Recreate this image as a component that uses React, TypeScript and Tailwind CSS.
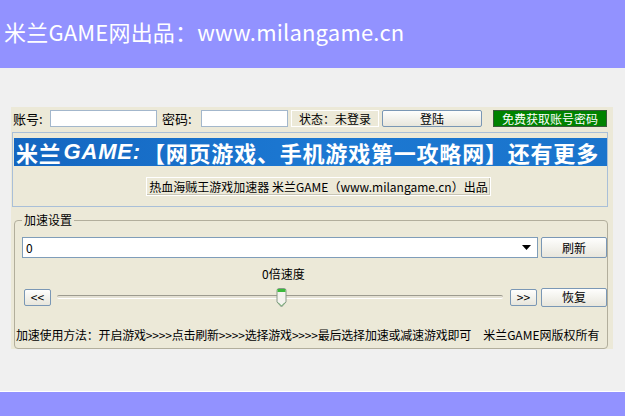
import React from 'react';

const cjk = "font-['Noto_Sans_CJK_SC','Noto_Sans',sans-serif]";
const xpBtn =
  'flex items-center justify-center rounded-[2px] border border-[#7a97b5] bg-gradient-to-b from-[#fefefd] to-[#e8e6dc] text-[12px] text-black';

const Thumb: React.FC = () => (
  <svg width="11" height="20" viewBox="0 0 11 20" className="absolute left-[219px] top-[-8px]">
    <path d="M1 2.5 Q1 0.5 3 0.5 H8 Q10 0.5 10 2.5 V14 L5.5 19 L1 14 Z" fill="#f4f3ee" stroke="#8a9a8a" />
    <rect x="1.5" y="1" width="8" height="3" fill="#3cb93c" />
    <path d="M2 14.5 L5.5 18 L9 14.5" fill="none" stroke="#6aa86a" />
  </svg>
);

const App: React.FC = () => {
  return (
    <div className={`w-[625px] h-[416px] bg-[#f0f0f0] flex flex-col overflow-hidden ${cjk}`}>
      {/* Site header */}
      <header className="h-[68px] shrink-0 bg-[#9292ff] flex items-center pl-[4px] pb-[6px]">
        <h1 className="text-[22px] leading-[30px] tracking-[0.2px] text-white">米兰GAME网出品：www.milangame.cn</h1>
      </header>

      {/* Accelerator window */}
      <div className="ml-[11px] mt-[39px] w-[602px] h-[242px] shrink-0 bg-[#ece9d8] flex flex-col text-black">
        {/* Login row */}
        <div className="mt-[3px] h-[17px] flex items-center text-[12px]">
          <span className="ml-[2px] w-[37px] text-[13px] leading-[17px]">账号:</span>
          <input className="w-[107px] h-[17px] bg-white border border-[#a3b7cc] outline-none" />
          <span className="ml-[5px] w-[39px] text-[13px] leading-[17px]">密码:</span>
          <input type="password" className="w-[87px] h-[17px] bg-white border border-[#a3b7cc] outline-none" />
          <div className="ml-[3px] w-[88px] h-[17px] border border-white flex items-center justify-center leading-[15px]">
            状态：未登录
          </div>
          <button className={`ml-[3px] w-[100px] h-[17px] ${xpBtn}`}>登陆</button>
          <button className="ml-[11px] w-[114px] h-[17px] bg-[#008200] border border-[#3b5b3b] text-white text-[12px] leading-[15px] flex items-center justify-center">
            免费获取账号密码
          </button>
        </div>

        {/* Banner box */}
        <div className="mt-[5px] ml-[1px] w-[596px] h-[75px] border border-[#a9bfd8] flex flex-col">
          <div className="mt-[5px] ml-[1px] h-[28px] bg-gradient-to-r from-[#1466c0] via-[#1c78d2] to-[#1a74cc] flex items-center pl-[2px] text-white font-bold text-[22px] leading-[24px] tracking-[0.8px] whitespace-nowrap">
            <span>米兰</span>
            <span className="italic font-['Liberation_Sans',sans-serif] mx-[2px]">GAME:</span>
            <span>【网页游戏、手机游戏第一攻略网】还有更多</span>
          </div>
          <div className="mt-[11px] ml-[133px] w-[345px] h-[19px] border border-white shadow-[inset_-1px_-1px_0_#c8c5b5] flex items-center justify-center text-[12px] leading-[17px]">
            热血海贼王游戏加速器 米兰GAME（www.milangame.cn）出品
          </div>
        </div>

        {/* Speed settings */}
        <fieldset className="mt-[6px] ml-[3px] w-[594px] h-[136px] p-0 m-0 border border-[#b2ae9c] rounded-[4px]">
          <legend className="ml-[7px] px-[2px] text-[12px] leading-[14px]">加速设置</legend>

          <div className="mt-[10px] flex items-center">
            <div className="ml-[7px] w-[516px] h-[21px] bg-white border border-[#7f9db9] flex items-center justify-between pl-[3px] pr-[6px] text-[12px]">
              <span>0</span>
              <svg width="9" height="5" viewBox="0 0 9 5">
                <path d="M0 0 H9 L4.5 5 Z" fill="#000" />
              </svg>
            </div>
            <button className={`ml-[3px] w-[66px] h-[21px] ${xpBtn}`}>刷新</button>
          </div>

          <div className="mt-[9px] pl-[247px] text-[12px] leading-[14px]">0倍速度</div>

          <div className="mt-[7px] h-[18px] flex items-center">
            <button className={`ml-[9px] w-[27px] h-[17px] ${xpBtn} leading-none`}>&lt;&lt;</button>
            <div className="relative ml-[6px] w-[446px] h-[4px] rounded-[2px] border-t border-[#9d9b8f] border-b border-b-white bg-[#e4e1d4]">
              <Thumb />
            </div>
            <button className={`ml-[7px] w-[27px] h-[17px] ${xpBtn} leading-none`}>&gt;&gt;</button>
            <button className={`ml-[4px] w-[66px] h-[19px] ${xpBtn}`}>恢复</button>
          </div>

          <p className="mt-[22px] ml-[1px] text-[12px] leading-[14px] whitespace-nowrap">
            <span className="tracking-[-0.2px]">
              加速使用方法：开启游戏&gt;&gt;&gt;&gt;点击刷新&gt;&gt;&gt;&gt;选择游戏&gt;&gt;&gt;&gt;最后选择加速或减速游戏即可
            </span>
            <span className="ml-[12px]">米兰GAME网版权所有</span>
          </p>
        </fieldset>
      </div>

      <div className="flex-1" />
      <div className="h-[1px] shrink-0 bg-white" />
      <footer className="h-[24px] shrink-0 bg-[#9292ff]" />
    </div>
  );
};

export default App;
